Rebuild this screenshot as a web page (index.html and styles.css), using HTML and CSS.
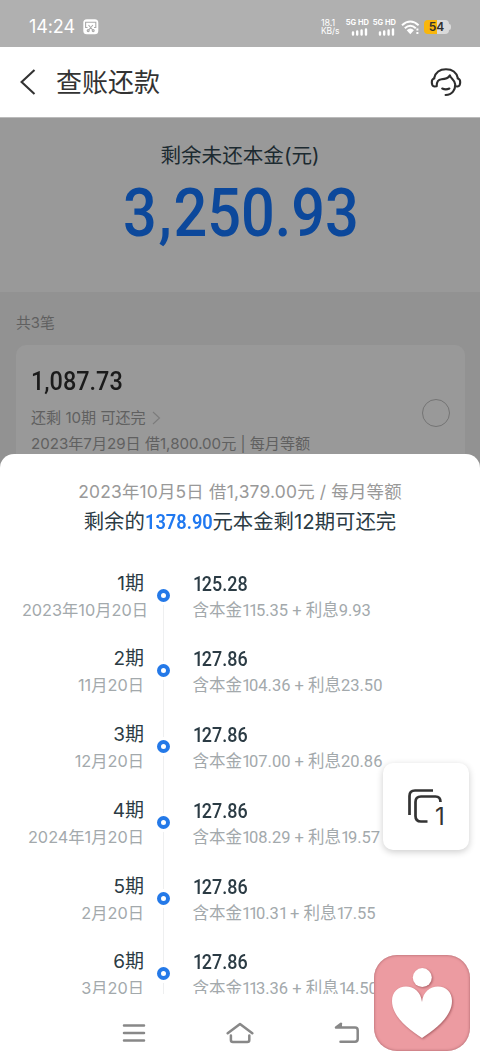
FILE: index.html
```
<!DOCTYPE html>
<html lang="zh-CN">
<head>
<meta charset="utf-8">
<title>查账还款</title>
<link rel="stylesheet" href="styles.css">
</head>
<body>
<div class="screen">
  <div class="status">
    <span class="clock">14:24</span>
    <svg class="shot" width="16" height="16" viewBox="0 0 16 16"><rect x=".3" y=".3" width="15" height="15" rx="3.5" fill="#fff"/><g fill="none" stroke="#aaa" stroke-width="1.1"><path d="M4.500 8.500H2.600V3.200H12.800V8.500H11M5.500 6 9.700 11M9.900 6 5.700 11"/><circle cx="5.200" cy="11.600" r="1"/><circle cx="10.200" cy="11.600" r="1"/></g></svg>
    <div class="speed"><span>18.1</span><span>KB/s</span></div>
    <div class="signal s1"><span>5G HD</span><svg width="18" height="8" viewBox="0 0 18 8"><path d="M3 4.500V6.500M7.200 3.500V6.500M11.600 2.500V6.500M16 1.500V6.500" stroke="#fff" stroke-width="2.400" stroke-linecap="round"/></svg></div>
    <div class="signal s2"><span>5G HD</span><svg width="18" height="8" viewBox="0 0 18 8"><path d="M3 4.500V6.500M7.200 3.500V6.500M11.600 2.500V6.500M16 1.500V6.500" stroke="#fff" stroke-width="2.400" stroke-linecap="round"/></svg></div>
    <svg class="wifi" width="19" height="15" viewBox="0 0 19 15"><g fill="none" stroke="#fff" stroke-width="2"><path d="M1 5.200Q9.300-2.200 17.600 5.200M3.800 8.200Q9.300 3.200 14.800 8.200"/></g><path d="M5.700 10.200Q9.300 7 12.900 10.200L9.300 14.200Z" fill="#fff"/><path d="M16.400 8.500v2M16.400 12v2" stroke="#fff" stroke-width="2"/></svg>
    <div class="battery"><span class="level">54</span><i></i></div>
  </div>

  <div class="nav">
    <svg class="back" width="16" height="26" viewBox="0 0 16 26"><path d="M14.500 1 1.600 13 14.500 25" fill="none" stroke="#333" stroke-width="2.100"/></svg>
    <h1>查账还款</h1>
    <svg class="service" width="32" height="30" viewBox="0 0 32 30"><g fill="none" stroke="#2d2d2d" stroke-width="2.100" stroke-linecap="round" stroke-linejoin="round"><path d="M4.200 11C5.500 5.500 10 2.200 16 2.200S26.500 5.500 27.800 11"/><path d="M4.300 11.500C2.500 11.700 1.800 13 1.800 15.200S2.500 19.200 4.500 19.500L6.700 19.200C6.600 15 8.500 12.400 11.500 12.200C15.500 12.200 18 11.600 19.900 8.400C20.500 11.500 25 12.500 25.200 17.400C25.300 22.800 22.500 28 15.600 28"/><path d="M27.700 11.500C29.500 11.700 30.200 13 30.200 15.200S29.500 19.200 27.500 19.500L25.200 19.200M12.200 21.500Q15.800 23.200 19.400 21.500"/></g></svg>
  </div>

  <div class="summary">
    <div class="caption">剩余未还本金(元)</div>
    <div class="total">3<span class="comma">,</span>250.93</div>
  </div>

  <div class="loans">
    <div class="count">共3笔</div>
    <div class="card">
      <div class="info">
        <div class="sum">1,087.73</div>
        <div class="line left">还剩 10期 可还完<svg width="9" height="14" viewBox="0 0 9 14"><path d="M1 1 7.500 7 1 13" fill="none" stroke="#7c7c7c" stroke-width="1.100"/></svg></div>
        <div class="line desc">2023年7月29日 借1,800.00元 | 每月等额</div>
      </div>
      <div class="radio"></div>
    </div>
  </div>

  <div class="sheet">
    <div class="sub">2023年10月5日 借1,379.00元 / 每月等额</div>
    <div class="head">剩余的<b>1378.90</b>元本金剩12期可还完</div>
    <div class="plan">
      <div class="row first"><div class="when"><div class="no">1期</div><div class="date full">2023年10月20日</div></div><div class="rail"><i></i></div><div class="what"><div class="amt"><s>1</s>25.28</div><div class="det">含本金<s>1</s><s>1</s>5.35 + 利息9.93</div></div></div>
      <div class="row"><div class="when"><div class="no">2期</div><div class="date">11月20日</div></div><div class="rail"><i></i></div><div class="what"><div class="amt"><s>1</s>27.86</div><div class="det">含本金<s>1</s>04.36 + 利息23.50</div></div></div>
      <div class="row"><div class="when"><div class="no">3期</div><div class="date">12月20日</div></div><div class="rail"><i></i></div><div class="what"><div class="amt"><s>1</s>27.86</div><div class="det">含本金<s>1</s>07.00 + 利息20.86</div></div></div>
      <div class="row"><div class="when"><div class="no">4期</div><div class="date">2024年1月20日</div></div><div class="rail"><i></i></div><div class="what"><div class="amt"><s>1</s>27.86</div><div class="det">含本金<s>1</s>08.29 + 利息<s>1</s>9.57</div></div></div>
      <div class="row"><div class="when"><div class="no">5期</div><div class="date">2月20日</div></div><div class="rail"><i></i></div><div class="what"><div class="amt"><s>1</s>27.86</div><div class="det">含本金<s>1</s><s>1</s>0.3<s>1</s> + 利息<s>1</s>7.55</div></div></div>
      <div class="row"><div class="when"><div class="no">6期</div><div class="date">3月20日</div></div><div class="rail"><i></i></div><div class="what"><div class="amt"><s>1</s>27.86</div><div class="det">含本金<s>1</s><s>1</s>3.36 + 利息<s>1</s>4.50</div></div></div>
    </div>
    <div class="keys">
      <svg width="24" height="20" viewBox="0 0 24 20"><path d="M2 2.500H22M2 10H22M2 17.500H22" stroke="#888" stroke-width="2.500" stroke-linecap="round"/></svg>
      <svg width="28" height="22" viewBox="0 0 28 22"><path d="M1.700 11.300 14 2 26.300 11.300M4.900 13.500V18Q4.900 20 6.900 20H21.300Q23.300 20 23.300 18V13.500" fill="none" stroke="#888" stroke-width="2.500" stroke-linecap="round" stroke-linejoin="round"/></svg>
      <svg width="26" height="22" viewBox="0 0 26 22"><path d="M7 1.800 2 5.500H21Q23.700 5.500 23.700 8.200V17Q23.700 19.700 21 19.700H6.500" fill="none" stroke="#888" stroke-width="2.500" stroke-linecap="round" stroke-linejoin="round"/><path d="M2 5.500 8 1.800V5.500Z" fill="#888"/></svg>
    </div>
  </div>

  <div class="windows">
    <svg width="34" height="36" viewBox="0 0 34 36"><g fill="none" stroke="#333" stroke-width="2.700"><path d="M1.500 26V7Q1.500 1.500 7 1.500H25"/><path d="M19.500 32.500H13Q7.500 32.500 7.500 27V13Q7.500 7.500 13 7.500H27.500Q32.500 7.500 32.500 13"/></g></svg>
    <span>1</span>
  </div>
  <div class="heart">
    <svg width="96" height="96" viewBox="0 0 96 96"><g fill="#fff"><circle cx="48.300" cy="22.600" r="9.500"/><path d="M48 83C36 75 18 62 18 46C18 37 24 31.500 32 31.500C40 31.500 47 37 48 47C49 37 56 31.500 64 31.500C72 31.500 78 37 78 46C78 62 60 75 48 83Z"/></g></svg>
  </div>
</div>
</body>
</html>
```
FILE: styles.css
```
* { box-sizing: border-box; }
body { margin: 0; background: #fff; font-family: Inter, "Noto Sans CJK SC", sans-serif; }
.screen { position: relative; width: 480px; height: 1061px; overflow: hidden; background: #929292; white-space: nowrap; }
svg { display: block; flex: none; }

.status { height: 47px; background: #b0b0b0; display: flex; align-items: center; padding: 7px 0 0 29px; color: #fff; }
.clock { font-size: 18px; line-height: 20px; width: 54px; letter-spacing: -.1px; }
.speed { margin-left: 222px; width: 25px; display: flex; flex-direction: column; font-size: 8.500px; line-height: 8.500px; letter-spacing: -.1px; }
.speed span:first-child { font-size: 9px; }
.signal { width: 27px; display: flex; flex-direction: column; align-items: flex-end; gap: 1px; padding-right: 5px; font: 700 7.500px/8px Inter, sans-serif; }
.signal span { margin-right: -1px; }
.wifi { margin-left: 1px; }
.battery { margin-left: 4px; display: flex; align-items: center; }
.level { width: 25px; height: 14px; border-radius: 4px; background: linear-gradient(90deg, #f8b60c 54%, #dadada 54%); color: #303030; font: 600 12px/14px Inter, sans-serif; text-align: center; }
.battery i { width: 2px; height: 6px; background: #dadada; border-radius: 0 2px 2px 0; }

.nav { height: 71px; background: #fff; border-bottom: 1px solid #bbb; display: flex; align-items: center; padding: 0 18px 0 20px; }
.nav h1 { margin: 2px auto 0 20px; font-size: 26px; line-height: 36px; font-weight: 400; color: #333; }

.summary { height: 174px; background: #999; text-align: center; padding-top: 24px; }
.caption { font-size: 20.600px; line-height: 28px; color: #1c2a30; }
.total { margin-top: 5px; padding-left: 2px; font: 500 66px/78px Roboto, sans-serif; color: #0c489b; transform: scaleX(.9); }
.comma { margin: 0 2px 0 2px; }

.loans { padding: 20px 15px 0 16px; }
.count { font-size: 14.800px; line-height: 22px; color: #606060; }
.card { margin-top: 11px; height: 130px; border-radius: 10px; background: #999; display: flex; justify-content: space-between; padding: 20px 15px 0; }
.sum { font: 500 25.500px/33px Roboto, sans-serif; color: #1b1b1b; transform: scaleX(.92); transform-origin: 0 0; }
.line { font-size: 15.100px; line-height: 26px; color: #606060; display: flex; align-items: center; }
.left { margin-top: 7px; }
.left svg { margin-left: 6px; }
.radio { width: 28px; height: 28px; margin-top: 34px; border: 1px solid #747474; border-radius: 50%; }

.sheet { position: absolute; left: 0; top: 453.500px; width: 480px; height: 608px; background: #fff; border-radius: 14px 14px 0 0; padding-top: 25.500px; text-align: center; }
.sub { font-size: 17.400px; line-height: 26px; letter-spacing: .2px; color: #999; }
.head { font-size: 20.400px; line-height: 34px; color: #2b3b44; }
.head b { display: inline-block; width: 67.500px; font: 600 20.500px/30px Roboto, sans-serif; color: #1f78f0; transform: scaleX(.89); transform-origin: 0 0; }
.plan { margin-top: 15.500px; height: 439px; padding-top: 16px; overflow: hidden; text-align: left; }
.row { display: flex; height: 75.800px; }
.when { width: 144px; display: flex; flex-direction: column; align-items: flex-end; }
.no { font-size: 19px; line-height: 26px; color: #2b3b44; }
.date { font-size: 16.300px; line-height: 27px; color: #a3a9ac; }
.full { margin-right: -4px; }
.rail { width: 39px; display: flex; justify-content: center; padding-top: 18px; background: linear-gradient(#eeeff0, #eeeff0) 19px 0 / 1px 100% no-repeat; }
.first .rail { background-position: 19px 25px; }
.rail i { width: 13px; height: 13px; border: 4px solid #2479e8; border-radius: 50%; background: #fff; box-shadow: 0 0 0 3px #fff; }
.what { padding-left: 9.500px; }
.what s { text-decoration: none; letter-spacing: -2.300px; }
.amt { font: 500 19.500px/27px Roboto, sans-serif; color: #2b3b44; transform: scaleX(.92); transform-origin: 0 0; }
.amt s { letter-spacing: -1.500px; }
.det { font: 400 16.500px/26px Roboto, "Noto Sans CJK SC", sans-serif; color: #a3a9ac; }
.keys { display: flex; justify-content: space-between; align-items: center; padding: 28px 120px 0 122px; }

.windows { position: absolute; left: 383px; top: 763px; width: 86px; height: 87px; border-radius: 10px; background: #fff; box-shadow: 0 2px 7px rgba(0, 0, 0, .2); padding: 26px 0 0 25px; display: flex; }
.windows span { font-size: 24px; line-height: 30px; margin: 13px 0 0 -7px; color: #333; }
.heart { position: absolute; left: 374px; top: 955px; width: 96px; height: 96px; border-radius: 23px; background: #ec9ba1; box-shadow: inset 0 0 3px #a35f65; }
.heart g { filter: drop-shadow(1px 1px 1px rgba(120, 50, 55, .55)); }
```
